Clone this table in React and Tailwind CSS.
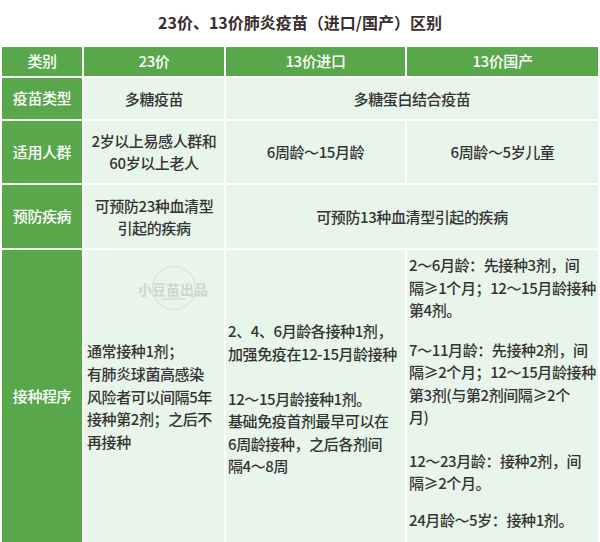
import React from "react";

const font = { fontFamily: '"Noto Sans CJK SC", "Noto Sans", sans-serif' };

function Head({ children }) {
  return (
    <div className="bg-[#58a74b] text-white text-[15px] font-medium flex items-center justify-center">
      {children}
    </div>
  );
}

function Label({ children }) {
  return (
    <div className="bg-[#58a74b] text-white text-[15px] font-medium flex items-center justify-center">
      {children}
    </div>
  );
}

function Cell({ children, className = "" }) {
  return (
    <div
      className={
        "bg-[#e8f5ea] text-[#333] text-[15px] leading-[22px] flex items-center justify-center text-center " +
        className
      }
    >
      {children}
    </div>
  );
}

export default function App() {
  return (
    <div className="w-[600px] h-[542px] overflow-hidden bg-white" style={font}>
      <h1 className="h-[47px] flex items-center justify-center pb-[3px] text-[16px] font-bold text-[#3a2d2d]">
        23价、13价肺炎疫苗（进口/国产）区别
      </h1>

      <div className="ml-[2px] w-[596px] grid grid-cols-[80px_140px_179px_191px] grid-rows-[29px_41px_62px_63px_292px] gap-[2px] tracking-[-0.4px] font-medium">
        {/* header */}
        <Head>类别</Head>
        <Head>23价</Head>
        <Head>13价进口</Head>
        <Head>13价国产</Head>

        {/* vaccine type */}
        <Label>疫苗类型</Label>
        <Cell>多糖疫苗</Cell>
        <Cell className="col-span-2">多糖蛋白结合疫苗</Cell>

        {/* population */}
        <Label>适用人群</Label>
        <Cell>
          2岁以上易感人群和
          <br />
          60岁以上老人
        </Cell>
        <Cell>6周龄～15月龄</Cell>
        <Cell>6周龄～5岁儿童</Cell>

        {/* diseases */}
        <Label>预防疾病</Label>
        <Cell>
          可预防23种血清型
          <br />
          引起的疾病
        </Cell>
        <Cell className="col-span-2">可预防13种血清型引起的疾病</Cell>

        {/* schedule */}
        <Label>接种程序</Label>
        <div className="relative bg-[#e8f5ea] text-[#333] text-[15px] leading-[22.7px] flex items-center pl-[3px] whitespace-nowrap">
          {/* watermark */}
          <div className="absolute left-[68px] top-[16px] w-[44px] h-[44px] rounded-full border border-[#d3ddd6]" />
          <div className="absolute left-[54px] top-[28px] text-[14px] font-bold text-[#cdd6d0] tracking-normal">
            小豆苗出品
          </div>
          <div className="absolute left-[78px] top-[48px] w-[24px] h-[2px] bg-[#d8e2db]" />
          <div className="mt-[2px]">
            通常接种1剂；
            <br />
            有肺炎球菌高感染
            <br />
            风险者可以间隔5年
            <br />
            接种第2剂；之后不
            <br />
            再接种
          </div>
        </div>
        <div className="bg-[#e8f5ea] text-[#333] text-[15px] leading-[22.5px] flex items-center pl-[2px] whitespace-nowrap">
          <div className="mt-[6px]">
            2、4、6月龄各接种1剂，
            <br />
            加强免疫在12-15月龄接种
            <br />
            <br />
            12～15月龄接种1剂。
            <br />
            基础免疫首剂最早可以在
            <br />
            6周龄接种，之后各剂间
            <br />
            隔4～8周
          </div>
        </div>
        <div className="bg-[#e8f5ea] text-[#333] text-[15px] leading-[22.5px] pl-[2px] pt-[4px] whitespace-nowrap overflow-hidden">
          <p>
            2～6月龄：先接种3剂，间
            <br />
            隔≥1个月；12～15月龄接种
            <br />
            第4剂。
          </p>
          <p className="mt-[17px]">
            7～11月龄：先接种2剂，间
            <br />
            隔≥2个月；12～15月龄接种
            <br />
            第3剂(与第2剂间隔≥2个
            <br />
            月)
          </p>
          <p className="mt-[21px]">
            12～23月龄：接种2剂，间
            <br />
            隔≥2个月。
          </p>
          <p className="mt-[14px]">24月龄～5岁：接种1剂。</p>
        </div>
      </div>
    </div>
  );
}
